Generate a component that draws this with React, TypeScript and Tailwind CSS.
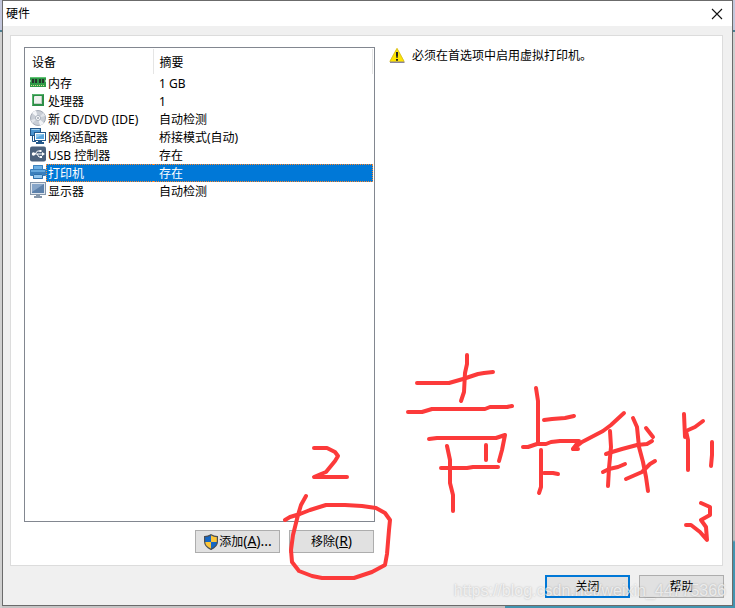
import type { ReactNode } from 'react';
import clsx from 'clsx';

type Device = {
  name: string;
  summary: string;
  icon: ReactNode;
};

function MemoryIcon() {
  return (
    <svg className="h-4 w-4" viewBox="0 0 16 16">
      <path d="M0 3h16v3l-1 1 1 1v5H0V8l1-1-1-1z" fill="#2f9a48" />
      <path d="M0 3h16v1H0z" fill="#5fc472" />
      <path d="M2 5h2v4H2zM5 5h2v4H5zM9 5h2v4H9zM12 5h2v4h-2z" fill="#26352c" />
      <path d="M1 11.500h14" stroke="#d8dc8a" strokeDasharray="1 1" />
    </svg>
  );
}

function ProcessorIcon() {
  return (
    <svg className="h-4 w-4" viewBox="0 0 16 16">
      <rect x="2" y="2" width="12" height="12" fill="#2c8e47" />
      <path d="M2.500 13.500v-11h11" fill="none" stroke="#58b56d" />
      <rect x="4" y="4" width="8" height="8" rx="1" fill="#eef1ee" />
      <path d="M4.500 11.500h7v-7" fill="none" stroke="#c3cbc5" />
    </svg>
  );
}

function DiscIcon() {
  return (
    <svg className="h-4 w-4" viewBox="0 0 16 16">
      <circle cx="8" cy="8" r="7.500" fill="#c9ced6" stroke="#a3aab5" />
      <path d="M8 8L2 3a8 8 0 0 1 4-2.500zM8 8l6 5a8 8 0 0 1-4 2.500z" fill="#f3f5f8" />
      <path d="M8 8l5.500-5A7 7 0 0 1 15 6zM8 8L2.500 13A7 7 0 0 1 1 10z" fill="#e2e5ea" />
      <circle cx="8" cy="8" r="2.500" fill="#fff" stroke="#a8b0bc" />
      <circle cx="8" cy="8" r="1" fill="#9aa3af" />
    </svg>
  );
}

function NetworkIcon() {
  return (
    <svg className="h-4 w-4" viewBox="0 0 16 16">
      <rect x="0.500" y="0.500" width="10" height="7" fill="#4b94cf" stroke="#24588a" />
      <path d="M1.500 1.500h8" stroke="#9fd0f0" />
      <path d="M2.500 8v5.500H6" fill="none" stroke="#24588a" />
      <rect x="4.500" y="4.500" width="11" height="8" fill="#fff" stroke="#24588a" />
      <rect x="6" y="6" width="8" height="5" fill="#5aa6df" />
      <path d="M6 6h8l-8 4z" fill="#8fc8ee" />
      <path d="M8 13h4v1h2v2H6v-2h2z" fill="#24588a" />
    </svg>
  );
}

function UsbIcon() {
  return (
    <svg className="h-4 w-4" viewBox="0 0 16 16">
      <rect x="0" y="0.500" width="16" height="15" rx="2" fill="#4b617c" />
      <path d="M3 8h9M5 8l2.500-3H10M7 8l2 3h2" fill="none" stroke="#fff" />
      <circle cx="3.500" cy="8" r="1.700" fill="#fff" />
      <path d="M12 6l3 2-3 2z" fill="#fff" />
      <path d="M9.500 4h2v2h-2zM10 10h2v2h-2z" fill="#fff" />
    </svg>
  );
}

function PrinterIcon() {
  return (
    <svg className="h-4 w-4" viewBox="0 0 16 16">
      <path d="M3 1h10v5H3z" fill="#6eb0e4" />
      <path d="M3.500 6V1.500h9V6" fill="none" stroke="#3d82bd" />
      <rect x="0" y="5" width="16" height="7" rx="1" fill="#397fbc" />
      <path d="M1 6h14v2H1z" fill="#65a8dc" />
      <path d="M3 10h10v5H3z" fill="#8fc5ee" />
      <path d="M3.500 10.500h9v4h-9z" fill="none" stroke="#2e70aa" />
    </svg>
  );
}

function DisplayIcon() {
  return (
    <svg className="h-4 w-4" viewBox="0 0 16 16">
      <rect x="0.500" y="0.500" width="15" height="12" fill="#dfe6ee" stroke="#8496aa" />
      <rect x="2" y="2" width="12" height="9" fill="#5c81ab" />
      <path d="M2 2h12L2 10z" fill="#86a5c8" />
      <path d="M6 13h4v1h2v2H4v-2h2z" fill="#8496aa" />
    </svg>
  );
}

function ShieldIcon() {
  return (
    <svg className="h-4 w-4 shrink-0" viewBox="0 0 16 16">
      <path d="M8 0.500c2 1.300 4.200 1.900 6.500 2v5c0 3.500-3 6.500-6.500 8-3.500-1.500-6.500-4.500-6.500-8v-5c2.300-.1 4.500-.7 6.500-2z" fill="#fdc638" />
      <path d="M8 .5v7.500H1.500V2.500c2.300-.1 4.500-.7 6.500-2zM8 8h6.500c-.2 3.300-3 6-6.500 7.500z" fill="#1567c4" />
      <path d="M8 0.700c2 1.200 4.200 1.800 6.400 1.900v5c0 3.400-2.900 6.300-6.400 7.800-3.500-1.500-6.400-4.400-6.400-7.800v-5c2.200-.1 4.400-.7 6.400-1.900z" fill="none" stroke="#4a4f55" strokeWidth="1.200" />
    </svg>
  );
}

function WarningIcon() {
  return (
    <svg className="h-4 w-4 shrink-0" viewBox="0 1 16 16">
      <path d="M8 2L14.500 14h-13z" fill="#ffe500" stroke="#ffe500" strokeWidth="1.500" strokeLinejoin="round" />
      <path d="M8 1.400L.8 14.600h14.400z" fill="none" stroke="#c9b13a" strokeWidth="0.700" strokeLinejoin="round" />
      <path d="M1 15.300h14.500" stroke="#6f6a86" />
      <path d="M7 5h2v3.500L8.500 11h-1L7 8.500zM7 12h2v1.800H7z" fill="#222" />
    </svg>
  );
}

const devices: Device[] = [
  { name: '内存', summary: '1 GB', icon: <MemoryIcon /> },
  { name: '处理器', summary: '1', icon: <ProcessorIcon /> },
  { name: '新 CD/DVD (IDE)', summary: '自动检测', icon: <DiscIcon /> },
  { name: '网络适配器', summary: '桥接模式(自动)', icon: <NetworkIcon /> },
  { name: 'USB 控制器', summary: '存在', icon: <UsbIcon /> },
  { name: '打印机', summary: '存在', icon: <PrinterIcon /> },
  { name: '显示器', summary: '自动检测', icon: <DisplayIcon /> },
];

const selected = '打印机';

function DialogButton({ primary, children }: { primary?: boolean; children: ReactNode }) {
  return (
    <button
      type="button"
      className={clsx(
        'flex h-[23px] w-[85px] items-center justify-center bg-[#e1e1e1]',
        primary ? 'border-2 border-[#0078d7]' : 'border border-[#adadad]'
      )}
    >
      {children}
    </button>
  );
}

function DeviceTable() {
  return (
    <div className="flex-1 border border-[#828790] p-px">
      <table className="w-full table-fixed border-collapse text-left">
        <thead>
          <tr className="h-[25px]">
            <th className="w-[127px] border-r border-[#e5e5e5] pt-0.5 pl-1.5 font-normal">设备</th>
            <th className="border-r border-[#e5e5e5] pt-0.5 pl-1.5 font-normal">摘要</th>
          </tr>
        </thead>
        <tbody>
          {devices.map((device) => {
            const active = device.name === selected;
            return (
              <tr key={device.name} className="h-[18px]">
                <td className="p-0 pl-1">
                  <div className="flex items-start">
                    {device.icon}
                    <span
                      className={clsx(
                        'h-[18px] flex-1 border border-r-0 pl-px leading-[18px] whitespace-nowrap',
                        active ? 'border-dotted border-[#ff8728] bg-[#0078d7] text-white' : 'border-transparent'
                      )}
                    >
                      {device.name}
                    </span>
                  </div>
                </td>
                <td className="p-0">
                  <div
                    className={clsx(
                      'h-[18px] border border-l-0 pl-1.5 leading-[18px]',
                      active ? 'border-dotted border-[#ff8728] bg-[#0078d7] text-white' : 'border-transparent'
                    )}
                  >
                    {device.summary}
                  </div>
                </td>
              </tr>
            );
          })}
        </tbody>
      </table>
    </div>
  );
}

const strokes = [
  // 2
  'M314 448h13l8 4 3 4-3 5-9 11-5 2-7 3h33',
  // ring round the remove button
  'M306 496l-5 9-3 10-3 12-2 8-2 15 1 12 7 9 13 5 10 2h32l18-6 13-7 2-11 2-24 1-10-5-7-9-5-14-2-17-1h-19l-16 5-10 4-10 3-5 3',
  // 声
  'M417 383h32l14-4 15-5 6-1 9-1',
  'M467 355v9l-2 9-1 19-3 9',
  'M408 412h14l10-3h53l5-2h17l5-1',
  'M429 439l8-1h59l9-3-3 15-3 11',
  'M486 445v15',
  'M447 446l3 14v23l3 12v16',
  'M441 468h26l6-1h25',
  // 卡
  'M536 388l2 13v42',
  'M523 447h5l9-3h9l5-2 9-1h19l-6 8h5',
  'M573 449l9-7 21-11 8-6 13-12',
  'M544 420l8-1 13-1 9-2',
  'M541 450v37l-2 6',
  'M544 473h9l5 1',
  // 我
  'M610 431l1 16-2 21-1 18',
  'M606 454l6-2 10-3 15-4 10-1 5-3',
  'M603 472l6-3 9-2 7-3',
  'M626 479l16-7 8-8 5-3',
  'M633 418l4 9 2 20 4 15 3 15 2 14',
  'M646 428l7 9',
  'M684 414l1 23',
  'M703 421l-8 6-9 4 2 9v30',
  'M712 442v13l-1 11',
  // 3
  'M701 503l9 4v8l-9 5 5 7 1 13-7-8-9-7h-5',
];

function Annotations() {
  return (
    <svg
      className="pointer-events-none absolute top-0 left-0"
      width="735"
      height="608"
      fill="none"
      stroke="#fc3a3a"
      strokeWidth="4"
      strokeLinecap="round"
      strokeLinejoin="round"
      aria-hidden="true"
    >
      {strokes.map((d) => (
        <path key={d} d={d} />
      ))}
    </svg>
  );
}

export default function App() {
  return (
    <div className="relative flex min-h-screen flex-col bg-[linear-gradient(#c3c7dc_0,#c3c7dc_30px,#4a7f92_30px,#4a7f92_32px,#cfcfcf_32px,#bdbdbd_540px,#4394b0_542px)] px-0.5 pb-0.5 font-['Noto_Sans','Noto_Sans_CJK_SC',sans-serif] text-[12px] leading-4 text-black">
      {/* Backdrop strip under the window */}
      <div className="absolute bottom-0 left-0 h-0.5 w-[505px] bg-[#c4c4c4]" />
      <div className="absolute bottom-0 left-0 h-[576px] w-0.5 bg-[#d0d0d0]" />

      <div className="relative flex flex-1 flex-col border border-[#6b6b6b] bg-[#f0f0f0]">
        <header className="flex h-[25px] items-center justify-between bg-white pr-[9px] pl-[3px]">
          <h1>硬件</h1>
          <button type="button" aria-label="关闭" className="flex h-4 w-3 items-center justify-center">
            <svg className="h-3 w-3" viewBox="0 0 12 12">
              <path d="M1 1l10 10M11 1L1 11" stroke="#111" strokeWidth="1.100" />
            </svg>
          </button>
        </header>

        <main className="mt-[9px] mr-[9px] ml-[7px] flex flex-1 border border-[#dcdcdc] bg-white">
          <section className="flex w-[364px] shrink-0 flex-col pt-[11px] pb-3 pl-[13px]">
            <DeviceTable />
            <div className="flex justify-end gap-[9px] pt-2 pr-px">
              <DialogButton>
                <ShieldIcon />
                <span>
                  添加
                  <span className="text-sm leading-4">
                    (<u>A</u>)...
                  </span>
                </span>
              </DialogButton>
              <DialogButton>
                <span>
                  移除
                  <span className="text-sm leading-4">
                    (<u>R</u>)
                  </span>
                </span>
              </DialogButton>
            </div>
          </section>

          <section className="flex-1 pt-3 pl-[14px]">
            <p className="flex items-center gap-[7px]">
              <WarningIcon />
              必须在首选项中启用虚拟打印机。
            </p>
          </section>
        </main>

        <footer className="flex justify-end gap-[9px] px-2 pt-[9px] pb-[7px]">
          <DialogButton primary>关闭</DialogButton>
          <DialogButton>帮助</DialogButton>
        </footer>
      </div>

      <Annotations />
      <span className="pointer-events-none absolute right-[9px] bottom-[7px] font-['Liberation_Sans',sans-serif] text-[16px] leading-5 text-white/70 [text-shadow:0_0_2px_rgba(0,0,0,0.25)]">
        https://blog.csdn.net/weixin_44775366
      </span>
    </div>
  );
}
